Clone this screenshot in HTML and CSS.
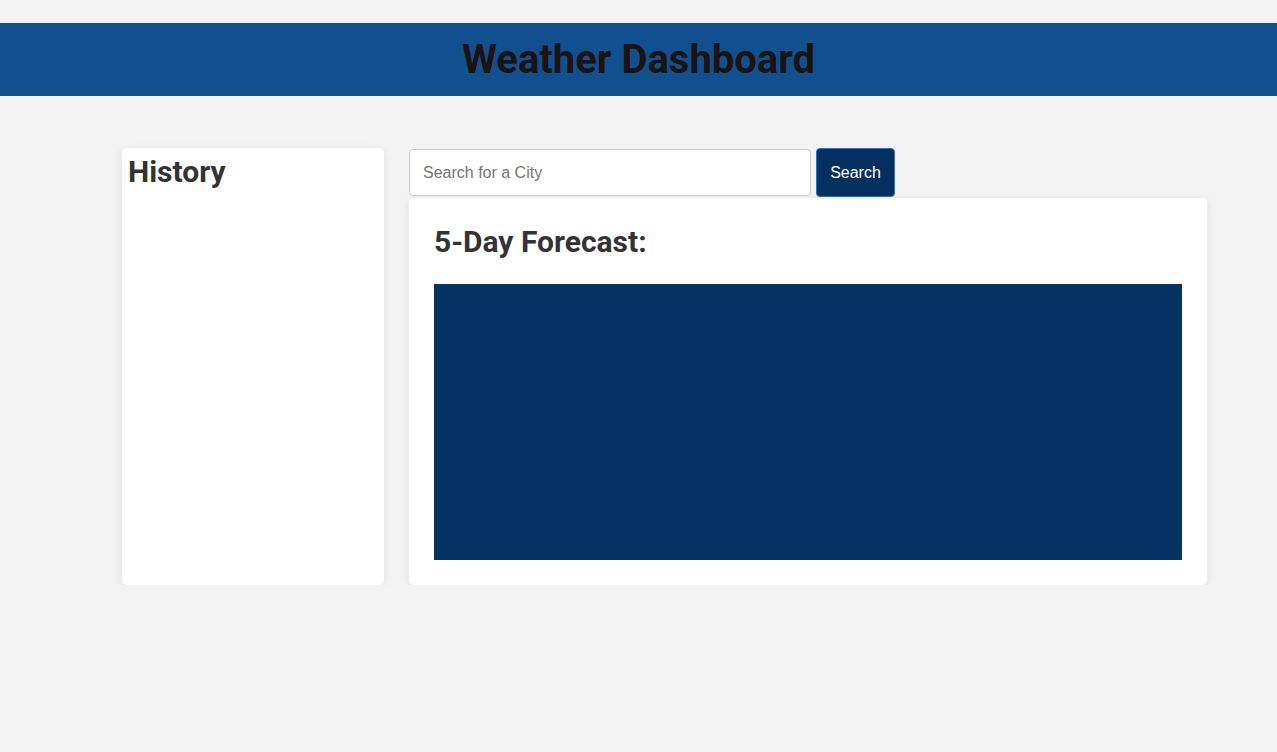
FILE: index.html
```html
<!DOCTYPE html>
<html lang="en">
<head>
<meta charset="utf-8">
<title>Weather Dashboard</title>
<link rel="stylesheet" href="styles.css">
</head>
<body>
<header class="site-header">
  <h1 class="site-title">Weather Dashboard</h1>
</header>
<main class="layout">
  <aside class="card history">
    <h2 class="history-title">History</h2>
  </aside>
  <section class="main-col">
    <form class="search-row">
      <input class="search-input" type="text" placeholder="Search for a City">
      <button class="search-btn" type="button">Search</button>
    </form>
    <div class="card forecast">
      <h2 class="forecast-title">5-Day Forecast:</h2>
      <div class="forecast-box"></div>
    </div>
  </section>
</main>
</body>
</html>
```
FILE: styles.css
```css
* { box-sizing: border-box; }
html, body { margin: 0; padding: 0; }
body {
  background: #f3f3f3;
  font-family: Roboto, "Liberation Sans", Arial, sans-serif;
  color: #333333;
  padding-top: 23px;
}
.site-header {
  background: #114f8f;
  height: 73px;
  display: flex;
  align-items: center;
  justify-content: center;
}
.site-title {
  margin: 0;
  font-size: 40px;
  font-weight: 700;
  color: #1b1212;
  line-height: 1;
}
.layout {
  display: flex;
  align-items: stretch;
  gap: 25px;
  margin: 52px 0 0 122px;
  width: 1085px;
}
.card {
  background: #ffffff;
  border-radius: 5px;
  box-shadow: 0 2px 10px rgba(0, 0, 0, 0.08);
}
.history {
  width: 262px;
  flex: none;
  padding: 5px 6px;
}
.history-title {
  margin: 0;
  font-size: 30px;
  font-weight: 700;
  line-height: 38px;
  color: #333333;
}
.main-col {
  flex: 1;
  display: flex;
  flex-direction: column;
}
.search-row {
  display: flex;
  align-items: flex-start;
  gap: 5px;
  margin: 0;
}
.search-input {
  width: 402px;
  height: 47px;
  margin-top: 1px;
  border: 1px solid #cccccc;
  border-radius: 4px;
  padding: 0 13px;
  font-family: "Liberation Sans", Arial, sans-serif;
  font-size: 16px;
  color: #333;
  background: #fff;
}
.search-input::placeholder { color: #757575; }
.search-btn {
  width: 79px;
  height: 49px;
  background: #03305f;
  border: 1px solid #1a73e8;
  border-radius: 4px;
  color: #ffffff;
  font-family: "Liberation Sans", Arial, sans-serif;
  font-size: 16px;
  padding: 0;
}
.forecast {
  margin-top: 1px;
  padding: 27px 25px 25px;
  height: 387px;
}
.forecast-title {
  margin: 0 0 26px;
  font-size: 30px;
  font-weight: 700;
  line-height: 33px;
  color: #333333;
}
.forecast-box {
  background: #033263;
  height: 276px;
}
```
